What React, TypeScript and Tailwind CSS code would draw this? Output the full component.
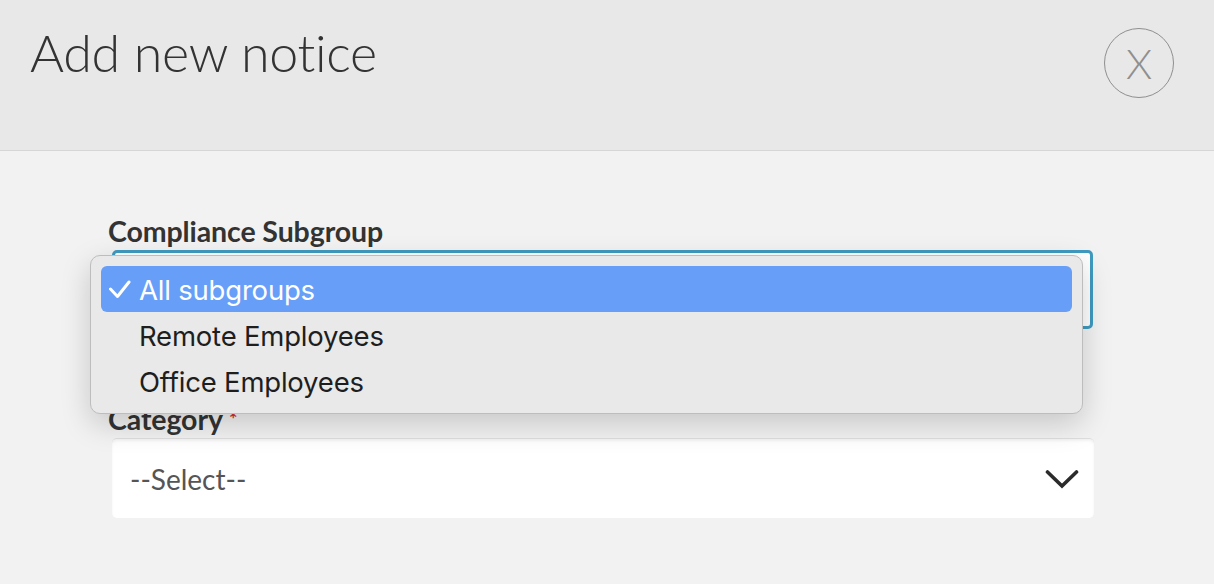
const lato = { fontFamily: "Lato, 'Liberation Sans', sans-serif" };

const options = ["All subgroups", "Remote Employees", "Office Employees"];

export default function App() {
  return (
    <div className="min-h-[584px] bg-[#f2f2f2] font-['Lato','Liberation_Sans',sans-serif]">
      {/* Header */}
      <div className="h-[151px] bg-[#e8e8e8] border-b border-[#d6d6d6] flex items-start justify-between pl-[30px] pr-[40px]">
        <h1 className="mt-[12px] text-[52px] leading-[80px] font-light text-[#333333] tracking-[-0.3px]">
          Add new notice
        </h1>
        <button className="mt-[28px] w-[70px] h-[70px] rounded-full border-[1.5px] border-[#8f8f8f] flex items-center justify-center text-[#8f8f8f] text-[42px] font-light leading-none">
          X
        </button>
      </div>

      {/* Form */}
      <div className="pl-[108px] pr-[120px] pt-[64px]">
        <label className="block h-[33px] mb-[2px] text-[28.5px] leading-[33px] font-bold text-[#333333] tracking-[-0.1px]">
          Compliance Subgroup
        </label>
        <div className="relative ml-[4px] w-[981px]">
          <div className="h-[79px] rounded-[5px] border-[3px] border-[#3f9ac0] bg-white" />

          {/* Open dropdown menu */}
          <div className="absolute left-[-22px] top-[5px] w-[993px] h-[159px] rounded-[10px] border border-[#bdbdbd] bg-[#e9e9e9] shadow-[0_10px_30px_rgba(0,0,0,0.18)] px-[10px] pt-[10px] font-['Inter','Noto_Sans',sans-serif] text-[27.5px] text-[#1e1e1e]">
            {options.map((o, i) => (
              <div
                key={o}
                className={`relative h-[46px] rounded-[6px] flex items-center pl-[38px] pt-[4px] tracking-[-0.2px] ${
                  i === 0 ? "bg-[#679ef8] text-white" : ""
                }`}
              >
                {i === 0 && (
                  <svg className="absolute left-[8px] top-[14px]" width="22" height="19" viewBox="0 0 22 19">
                    <polyline points="1.5,9 8.5,16.5 20,2" fill="none" stroke="white" strokeWidth="3" strokeLinecap="round" strokeLinejoin="round" />
                  </svg>
                )}
                {o}
              </div>
            ))}
          </div>
        </div>

        <label className="block h-[33px] mt-[74px] mb-[2px] text-[28.5px] leading-[33px] font-bold text-[#333333] tracking-[-0.1px]" style={lato}>
          Category <span className="text-[#d9302c] text-[20px] align-top">*</span>
        </label>
        <div className="ml-[4px] w-[982px] h-[80px] rounded-[5px] bg-white border-t border-[#dedede] shadow-[inset_0_2px_3px_rgba(0,0,0,0.05)] flex items-center justify-between pl-[18px] pr-[14px]">
          <span className="text-[28px] text-[#555555]">--Select--</span>
          <svg width="34" height="20" viewBox="0 0 34 20" className="mr-[1px]">
            <polyline points="2.5,3 17,17 31.5,3" fill="none" stroke="#2b2b2b" strokeWidth="3.6" strokeLinecap="round" strokeLinejoin="miter" />
          </svg>
        </div>
      </div>
    </div>
  );
}
